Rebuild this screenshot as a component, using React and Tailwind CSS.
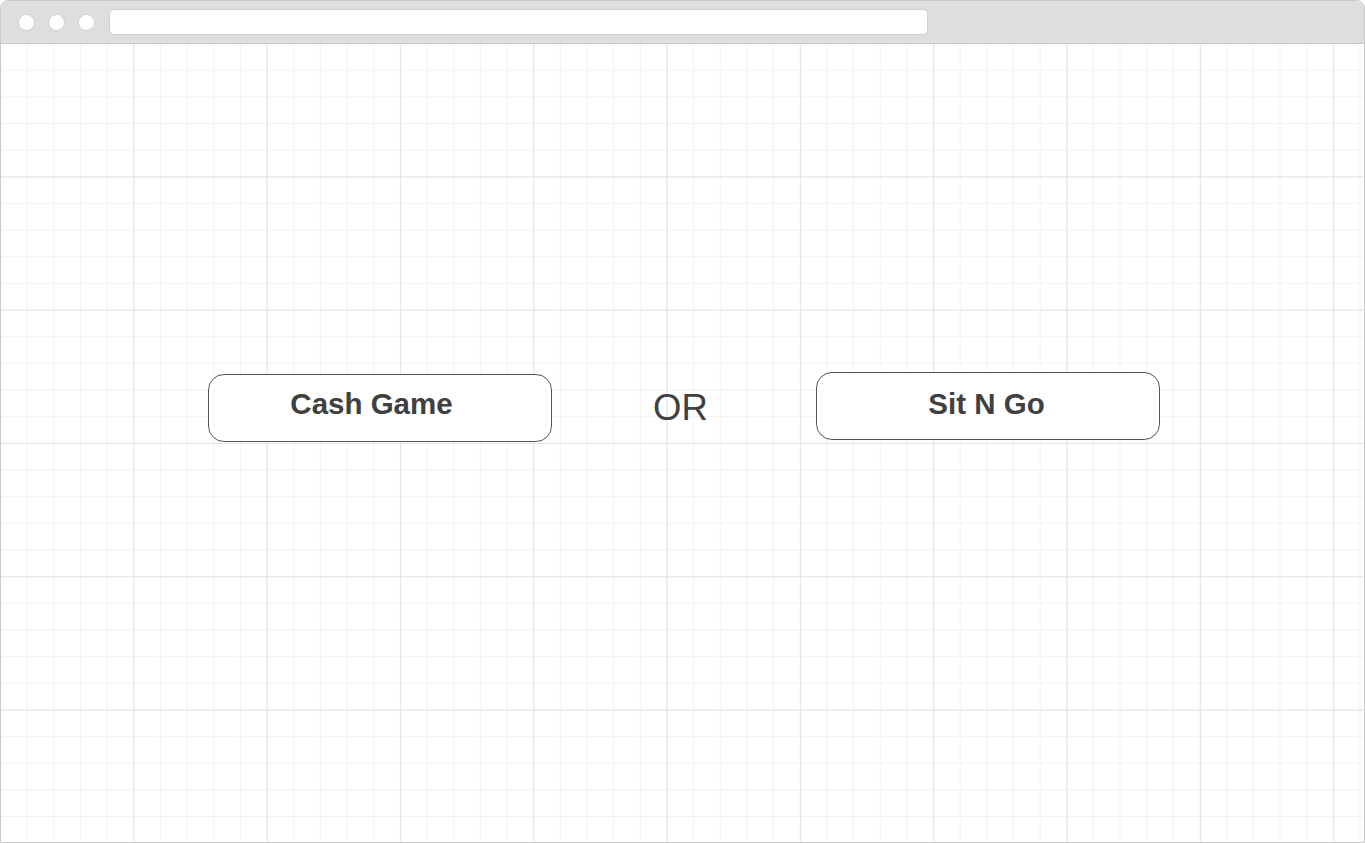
export default function App() {
  return (
    <div className="w-[1365px] h-[843px] bg-white" style={{ fontFamily: '"Liberation Sans", Arial, sans-serif' }}>
      <div className="w-full h-full flex flex-col border border-[#c9c9c9] rounded-t-[8px] overflow-hidden">
        <div className="h-[43px] shrink-0 bg-[#dedede] border-b border-[#c9c9c9] flex items-center">
          <div className="flex items-center gap-[13px] ml-[17px]">
            <div className="w-[17px] h-[17px] rounded-full bg-white border border-[#d0d0d0]" />
            <div className="w-[17px] h-[17px] rounded-full bg-white border border-[#d0d0d0]" />
            <div className="w-[17px] h-[17px] rounded-full bg-white border border-[#d0d0d0]" />
          </div>
          <div className="ml-[14px] w-[819px] h-[26px] bg-white rounded-[5px] border border-[#d0d0d0]" />
        </div>
        <div className="flex-1 flex items-start bg-white bg-[linear-gradient(to_right,#e4e4e4_1px,transparent_1px),linear-gradient(to_bottom,#e4e4e4_1px,transparent_1px),linear-gradient(to_right,#f2f2f2_1px,transparent_1px),linear-gradient(to_bottom,#f2f2f2_1px,transparent_1px)] bg-[size:133.333px_133.333px,133.333px_133.333px,26.6667px_26.6667px,26.6667px_26.6667px] bg-[position:-1px_-1px]">
          <div className="ml-[207px] mt-[330px] w-[344px] h-[68px] shrink-0 rounded-[16px] border border-[#555] bg-white flex items-center justify-center pr-[17px] pb-[7px] text-[29.5px] font-bold text-[#404040]">
            Cash Game
          </div>
          <div className="w-[264px] shrink-0 pl-[101px] mt-[346px] text-[36.5px] text-[#404040] leading-none">OR</div>
          <div className="mt-[328px] w-[344px] h-[68px] shrink-0 rounded-[16px] border border-[#555] bg-white flex items-center justify-center pr-[3px] pb-[3px] text-[29.5px] font-bold text-[#404040]">
            Sit N Go
          </div>
        </div>
      </div>
    </div>
  );
}
